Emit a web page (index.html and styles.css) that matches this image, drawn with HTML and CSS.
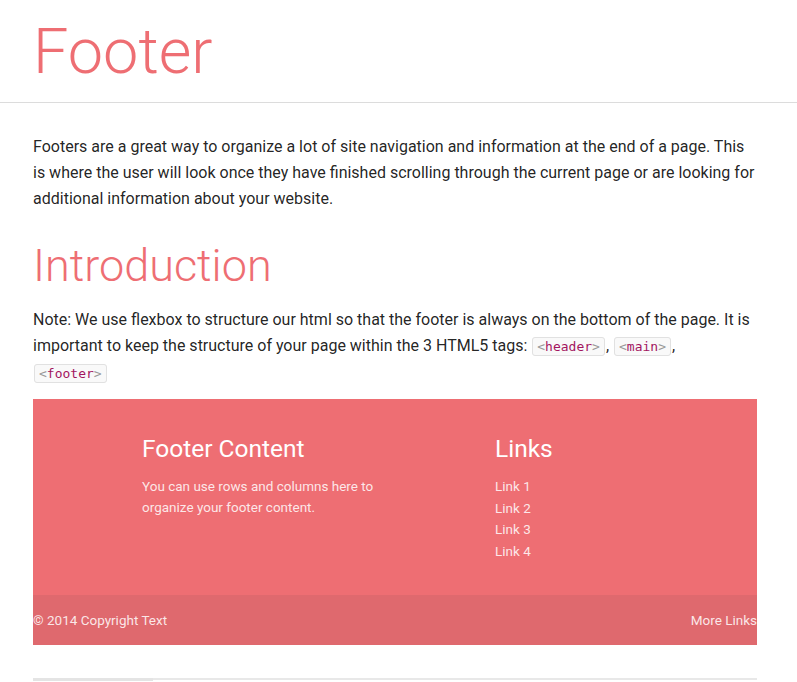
FILE: index.html
```html
<!DOCTYPE html>
<html>
<head>
<meta charset="utf-8">
<link rel="stylesheet" href="styles.css">
</head>
<body>
<header class="page-header">
  <h1 class="title">Footer</h1>
</header>
<main class="content">
  <p class="lead">Footers are a great way to organize a lot of site navigation and information at the end of a page. This is where the user will look once they have finished scrolling through the current page or are looking for additional information about your website.</p>
  <h2 class="section-title">Introduction</h2>
  <p class="note">Note: We use flexbox to structure our html so that the footer is always on the bottom of the page. It is important to keep the structure of your page within the 3 HTML5 tags: <code class="tag"><span class="br">&lt;</span>header<span class="br">&gt;</span></code>, <code class="tag"><span class="br">&lt;</span>main<span class="br">&gt;</span></code>, <code class="tag"><span class="br">&lt;</span>footer<span class="br">&gt;</span></code></p>
  <footer class="demo-footer">
    <div class="footer-main">
      <div class="col-left">
        <h5 class="f-title">Footer Content</h5>
        <p class="f-text">You can use rows and columns here to organize your footer content.</p>
      </div>
      <div class="col-right">
        <h5 class="f-title">Links</h5>
        <ul class="f-links">
          <li>Link 1</li>
          <li>Link 2</li>
          <li>Link 3</li>
          <li>Link 4</li>
        </ul>
      </div>
    </div>
    <div class="footer-copy">
      <span>© 2014 Copyright Text</span>
      <span>More Links</span>
    </div>
  </footer>
  <div class="tabs"><div class="tab-active"></div></div>
</main>
</body>
</html>
```
FILE: styles.css
```css
html, body {
  margin: 0;
  padding: 0;
}
body {
  font-family: Roboto, "Noto Sans", sans-serif;
  color: rgba(0,0,0,0.87);
  background: #fff;
  overflow: hidden;
}
.page-header {
  border-bottom: 1px solid #dcdcdc;
  padding: 17px 33px 16px;
}
.title {
  margin: 0;
  font-size: 63px;
  font-weight: 300;
  line-height: 1.1;
  color: #ee6e73;
}
.content {
  padding: 0 40px 0 33px;
}
.lead {
  margin: 31px 0 0;
  font-size: 16px;
  line-height: 26px;
}
.section-title {
  margin: 29px 0 0;
  font-size: 45px;
  font-weight: 300;
  line-height: 1.1;
  color: #ee6e73;
}
.note {
  margin: 16px 0 0;
  padding-right: 6px;
  font-size: 16px;
  line-height: 26px;
}
.tag {
  font-family: "DejaVu Sans Mono", monospace;
  font-size: 13px;
  color: #a3155f;
  background: #f9f9f9;
  border: 1px solid #e1e1e1;
  border-radius: 3px;
  padding: 1px 4px;
  margin: 0 1px;
}
.tag .br {
  color: #999;
}
.demo-footer {
  margin-top: 12px;
  background: #ee6e73;
  color: #fff;
}
.footer-main {
  display: flex;
  padding: 35px 0 32px 109px;
}
.col-left {
  width: 353px;
}
.f-title {
  margin: 0;
  font-size: 24.5px;
  font-weight: 400;
  line-height: 30px;
}
.f-text {
  margin: 12px 0 0;
  font-size: 13.5px;
  line-height: 21px;
  color: rgba(255,255,255,0.85);
  width: 250px;
}
.f-links {
  list-style: none;
  margin: 12px 0 0;
  padding: 0;
  font-size: 13.5px;
  line-height: 21.7px;
  color: rgba(255,255,255,0.85);
}
.footer-copy {
  display: flex;
  justify-content: space-between;
  align-items: center;
  height: 50px;
  background: rgba(51,51,51,0.08);
  font-size: 13.5px;
  color: rgba(255,255,255,0.85);
}
.tabs {
  margin-top: 33px;
  border-top: 2px solid #e8e8e8;
  height: 10px;
}
.tab-active {
  width: 120px;
  height: 3px;
  margin-top: -2px;
  background: #e4e4e4;
}
```
